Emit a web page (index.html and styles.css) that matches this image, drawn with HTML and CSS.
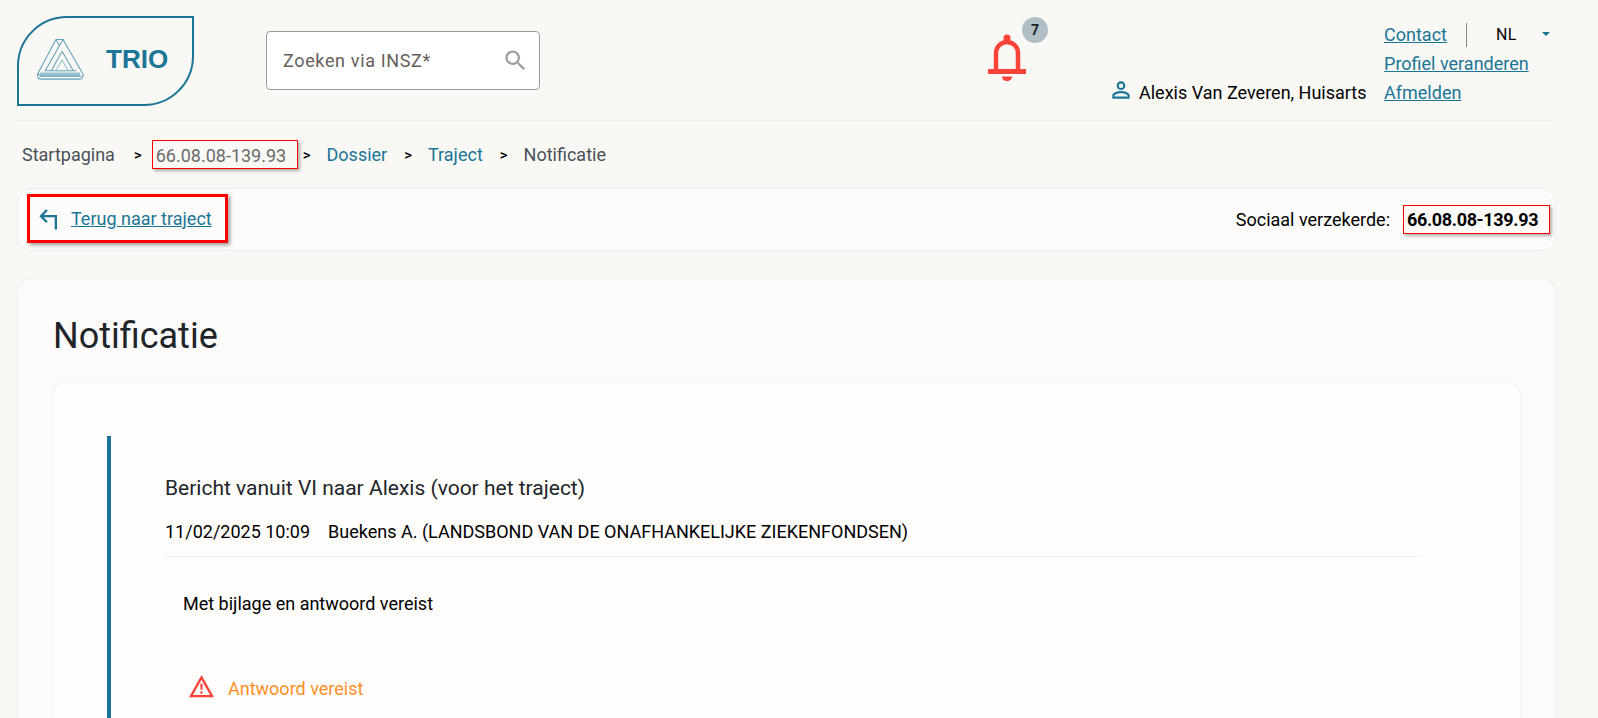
FILE: index.html
```html
<!DOCTYPE html>
<html lang="nl">
<head>
<meta charset="utf-8">
<title>TRIO - Notificatie</title>
<link rel="stylesheet" href="styles.css">
</head>
<body>
<header class="topbar">
  <a class="logo">
    <svg class="logo-mark" viewBox="0 0 46 40" width="47" height="41" fill="none" stroke="#5f9fb9" stroke-width="1" stroke-linejoin="round">
      <path d="M3 34.500H42" stroke="#93bfd0" stroke-width="3.500"/>
      <path d="M18.500.5H25.500L44.800 34Q45.800 36 44.500 37.800 43.500 39.200 41.500 39.200H4Q2 39.200 1 37.500 0 35.500 1 33.500Z"/>
      <path d="M25.500.5 8 31H38.500"/>
      <path d="M18.500.5 22 6.500"/>
      <path d="M1 33.500 3.500 36.500H44"/>
      <path d="M24.500 12 14 31M24.500 12 35.500 31"/>
      <path d="M18.500 31H30.500L24.500 20.500Z" stroke="#93bfd0"/>
    </svg>
    <span class="logo-text">TRIO</span>
  </a>
  <div class="search">
    <span class="search-hint">Zoeken via INSZ*</span>
    <svg class="search-icon" viewBox="0 0 24 24" width="27" height="27"><path fill="#9e9e9e" d="M15.500 14h-.79l-.28-.27A6.470 6.470 0 0 0 16 9.500 6.500 6.500 0 1 0 9.500 16c1.610 0 3.090-.59 4.230-1.570l.27.280v.79l5 4.990L20.490 19l-4.990-5zm-6 0C7.010 14 5 11.990 5 9.500S7.010 5 9.500 5 14 7.010 14 9.500 11.990 14 9.500 14z"/></svg>
  </div>
  <div class="bell">
    <svg viewBox="0 0 38 47" width="38" height="47" fill="#fa4339">
      <path d="M8 37V19a11 11 0 0 1 22 0V37" fill="none" stroke="#fa4339" stroke-width="4.500"/>
      <circle cx="19" cy="4" r="3.600"/>
      <rect x="0" y="35" width="38" height="5"/>
      <path d="M14 42.500h10c0 2.800-2.200 4.500-5 4.500s-5-1.700-5-4.500Z"/>
    </svg>
    <span class="bell-count">7</span>
  </div>
  <div class="user">
    <svg viewBox="0 0 24 24" width="26" height="26"><path fill="#1b7596" d="M12 5.900a2.100 2.100 0 1 1 0 4.200 2.100 2.100 0 0 1 0-4.200m0 9c2.970 0 6.100 1.460 6.100 2.100v1.100H5.900V17c0-.64 3.130-2.100 6.100-2.100M12 4C9.790 4 8 5.790 8 8s1.790 4 4 4 4-1.790 4-4-1.790-4-4-4zm0 9c-2.670 0-8 1.340-8 4v3h16v-3c0-2.660-5.330-4-8-4z"/></svg>
    <span>Alexis Van Zeveren, Huisarts</span>
  </div>
  <nav class="account">
    <div class="account-row">
      <a class="link">Contact</a>
      <span class="sep"></span>
      <span class="lang">NL</span>
      <span class="caret"></span>
    </div>
    <a class="link">Profiel veranderen</a>
    <a class="link">Afmelden</a>
  </nav>
</header>

<nav class="crumbs">
  <span class="crumb-first">Startpagina</span>
  <span class="gt gt-a">&gt;</span>
  <span class="mark-thin crumb-id">66.08.08-139.93</span>
  <span class="gt gt-b">&gt;</span>
  <a class="crumb-link">Dossier</a>
  <span class="gt gt-c">&gt;</span>
  <a class="crumb-link">Traject</a>
  <span class="gt gt-c">&gt;</span>
  <span class="crumb-current">Notificatie</span>
</nav>

<section class="backbar">
  <div class="mark-thick">
    <svg viewBox="0 0 18 20" width="19" height="21" fill="none" stroke="#1b7596" stroke-width="2.200"><path d="M16 19.500V6.800H2M7.500 1 1.800 6.800l5.700 5.800"/></svg>
    <a class="link back-link">Terug naar traject</a>
  </div>
  <div class="insured">
    <span>Sociaal verzekerde:</span>
    <b class="mark-thin insured-id">66.08.08-139.93</b>
  </div>
</section>

<main class="panel">
  <h1 class="title">Notificatie</h1>
  <div class="inner">
    <article class="message">
      <h2 class="msg-title">Bericht vanuit VI naar Alexis (voor het traject)</h2>
      <div class="msg-meta"><span>11/02/2025 10:09</span><span>Buekens A. (LANDSBOND VAN DE ONAFHANKELIJKE ZIEKENFONDSEN)</span></div>
      <p class="msg-body">Met bijlage en antwoord vereist</p>
      <div class="msg-warn">
        <svg viewBox="0 0 26 24" width="25" height="23" fill="none" stroke="#fa4339"><path d="M13 2.500 24 22H2Z" stroke-width="2.400" stroke-linejoin="miter"/><path d="M13 9v6.500M13 17v2.500" stroke-width="2.200"/></svg>
        <span>Antwoord vereist</span>
      </div>
    </article>
  </div>
</main>
</body>
</html>
```
FILE: styles.css
```css
* { box-sizing: border-box; }
body {
  display: flex;
  flex-direction: column;
  margin: 0;
  height: 718px;
  overflow: hidden;
  padding: 0 42px 0 17px;
  background: #f9f8f5;
  color: #000;
  font: 18px/24px Roboto, sans-serif;
}
a { color: inherit; }
.link { color: #1b7596; text-decoration: underline; }

.topbar {
  display: flex;
  flex: none;
  align-items: flex-start;
  height: 121px;
  border-bottom: 1px solid #eeedeb;
}
.logo {
  display: flex;
  align-items: center;
  width: 177px;
  height: 90px;
  margin-top: 16px;
  padding-left: 18px;
  border: 2px solid #1b7596;
  border-radius: 50px 0 50px 0;
}
.logo-mark { flex: none; margin-bottom: 4px; }
.logo-text {
  margin: 0 0 3px 22px;
  color: #1b7596;
  font: bold 26px "Liberation Sans", sans-serif;
}
.search {
  display: flex;
  align-items: center;
  justify-content: space-between;
  width: 274px;
  height: 59px;
  margin: 31px 0 0 72px;
  padding: 0 10px 0 16px;
  border: 1px solid #9a9a9a;
  border-radius: 4px;
  background: #fff;
}
.search-hint { color: #66605c; font-size: 18px; letter-spacing: .64px; }
.bell { position: relative; margin: 34px 0 0 448px; width: 38px; height: 47px; }
.bell svg { display: block; }
.bell-count {
  position: absolute;
  left: 34px;
  top: -17px;
  width: 26px;
  height: 26px;
  border-radius: 50%;
  background: #b0bec5;
  color: #212529;
  font-size: 14px;
  font-weight: 700;
  line-height: 26px;
  text-align: center;
}
.user {
  display: flex;
  align-items: center;
  gap: 5px;
  margin: 77px 0 0 82px;
}
.user svg { display: block; margin-bottom: 6px; }
.account {
  display: flex;
  flex-direction: column;
  align-items: flex-start;
  margin: 20px 0 0 17.500px;
  line-height: 29px;
}
.account-row { display: flex; align-items: center; }
.sep { width: 1px; height: 24px; margin: 0 29px 0 19px; background: #8a8a8a; }
.lang { font-size: 16px; letter-spacing: .5px; }
.caret {
  width: 0;
  height: 0;
  margin-left: 25px;
  margin-bottom: 2px;
  border: 4.500px solid transparent;
  border-top: 4.500px solid #1b7596;
  border-bottom: 0;
}

.crumbs {
  display: flex;
  flex: none;
  align-items: center;
  height: 67px;
  padding: 1px 0 0 5px;
}
.crumb-first, .crumb-current { color: #495057; }
.crumb-id { color: #6b6b6b; }
.crumb-link { color: #1b7596; }
.gt { font-size: 15px; font-weight: 500; color: #000; }
.gt-a { margin: 0 10px 0 19px; }
.gt-b { margin: 0 16px 0 5px; }
.gt-c { margin: 0 16px 0 17px; }
.mark-thin {
  border: 1px solid #f00;
  box-shadow: 2px 2px 3px rgba(0, 0, 0, .3);
}
.crumb-id { width: 146px; height: 29px; margin-top: -2px; padding: 2px 0 0 3px; line-height: 26px; }

.backbar {
  display: flex;
  flex: none;
  align-items: center;
  justify-content: space-between;
  height: 63px;
  padding: 0 5px 0 9px;
  border: 1px solid #efeeec;
  border-radius: 14px;
  background: #fdfcfa;
}
.mark-thick {
  display: flex;
  align-items: center;
  gap: 13px;
  width: 201px;
  height: 49px;
  margin-top: -2px;
  padding: 1px 0 0 9px;
  border: 3px solid #f00;
  box-shadow: 2px 2px 4px rgba(0, 0, 0, .4);
}
.insured { display: flex; align-items: center; gap: 13px; }
.insured-id { width: 147px; height: 29px; padding-left: 3px; letter-spacing: -.35px; line-height: 27px; }

.panel {
  display: flex;
  flex: 1;
  flex-direction: column;
  min-height: 0;
  margin-top: 27px;
  padding: 1px 34px 0;
  overflow: hidden;
  border: 1px solid #efeeec;
  border-bottom: 0;
  border-radius: 14px 14px 0 0;
  background: #fcfbf9;
}
.title {
  flex: none;
  margin: 0;
  padding: 31px 0 0 1px;
  height: 102px;
  color: #212529;
  font-size: 36px;
  line-height: 50px;
  font-weight: 400;
}
.inner {
  display: flex;
  flex: 1;
  flex-direction: column;
  min-height: 0;
  padding: 53px 0 0 54px;
  border: 1px solid #f3f2f0;
  border-bottom: 0;
  border-radius: 14px 14px 0 0;
  background: #fffefd;
}
.message {
  flex: 1;
  padding: 34px 98px 0 54px;
  border-left: 4px solid #1b7596;
}
.msg-title {
  margin: 0;
  color: #212529;
  font-size: 21px;
  line-height: 36px;
  font-weight: 400;
}
.msg-meta {
  display: flex;
  gap: 18px;
  height: 51px;
  padding-top: 14px;
  border-bottom: 1px solid #eceef1;
}
.msg-body { margin: 35px 0 0 18px; }
.msg-warn {
  display: flex;
  align-items: center;
  gap: 14px;
  margin: 59px 0 0 24px;
  color: #ff8f1f;
}
.msg-warn svg { margin-bottom: 4px; }
```
